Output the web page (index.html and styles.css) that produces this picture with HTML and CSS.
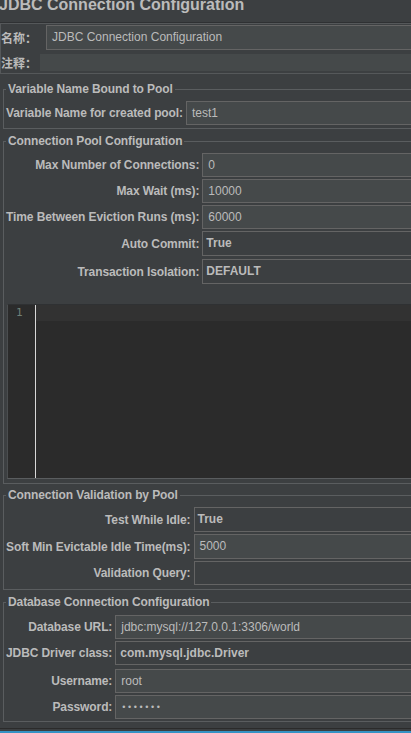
FILE: index.html
```html
<!DOCTYPE html>
<html lang="en">
<head>
  <meta charset="UTF-8" />
  <meta name="viewport" content="width=device-width, initial-scale=1.0"/>
  <title>JDBC Connection Configuration</title>
  <link rel="stylesheet" href="styles.css">
</head>
<body>

  <div class="page">
    <h1 class="title">JDBC Connection Configuration</h1>

    <div class="name-panel">
      <div class="name-row">
        <span class="name-label">名称：</span>
        <div class="field field--name">JDBC Connection Configuration</div>
      </div>
      <div class="name-row name-row--comment">
        <span class="name-label">注释：</span>
        <div class="comment"></div>
      </div>
    </div>

    <fieldset class="group group--var">
      <legend>Variable Name Bound to Pool</legend>
      <div class="form-grid">
        <label>Variable Name for created pool:</label>
        <div class="field">test1</div>
      </div>
    </fieldset>

    <fieldset class="group group--pool">
      <legend>Connection Pool Configuration</legend>
      <div class="form-grid">
        <label>Max Number of Connections:</label>
        <div class="field">0</div>
        <label>Max Wait (ms):</label>
        <div class="field">10000</div>
        <label>Time Between Eviction Runs (ms):</label>
        <div class="field">60000</div>
        <label>Auto Commit:</label>
        <div class="field field--combo">True</div>
        <label class="spaced">Transaction Isolation:</label>
        <div class="field field--combo spaced">DEFAULT</div>
      </div>

      <div class="editor">
        <div class="gutter"><span class="line-no">1</span></div>
        <div class="code">
          <div class="current-line"></div>
        </div>
      </div>
    </fieldset>

    <fieldset class="group group--validation">
      <legend>Connection Validation by Pool</legend>
      <div class="form-grid">
        <label>Test While Idle:</label>
        <div class="field field--combo">True</div>
        <label>Soft Min Evictable Idle Time(ms):</label>
        <div class="field field--tall">5000</div>
        <label>Validation Query:</label>
        <div class="field field--empty"></div>
      </div>
    </fieldset>

    <fieldset class="group group--db">
      <legend>Database Connection Configuration</legend>
      <div class="form-grid">
        <label>Database URL:</label>
        <div class="field">jdbc:mysql://127.0.0.1:3306/world</div>
        <label>JDBC Driver class:</label>
        <div class="field field--driver">com.mysql.jdbc.Driver</div>
        <label class="spaced-lg">Username:</label>
        <div class="field spaced-lg">root</div>
        <label>Password:</label>
        <div class="field field--password">•••••••</div>
      </div>
    </fieldset>

    <div class="status-bar"></div>
  </div>

</body>
</html>
```

FILE: styles.css
```css
body {
  margin: 0;
  padding: 0;
  background: #3c3f41;
  color: #bbbbbb;
  font-family: 'Liberation Sans', Arial, 'Noto Sans CJK SC', sans-serif;
  font-size: 12px;
  overflow: hidden;
}

.page {
  width: 440px;
  height: 733px;
  display: flex;
  flex-direction: column;
}

.title {
  margin: -3px 0 0 -1px;
  height: 26px;
  font-size: 16px;
  line-height: 16px;
  font-weight: bold;
  color: #bbbbbb;
  border-bottom: 1px solid #2f3133;
  box-sizing: border-box;
  flex: none;
}

/* name / comment block */
.name-panel {
  border-top: 1px solid #55585a;
  border-bottom: 1px solid #55585a;
  border-left: 1px solid #55585a;
  height: 51px;
  box-sizing: border-box;
  padding-top: 1px;
  flex: none;
}

.name-row {
  display: flex;
  align-items: center;
  height: 25px;
}

.name-row--comment {
  margin-top: 4px;
  height: 17px;
}

.name-label {
  font-family: 'Noto Sans CJK SC', sans-serif;
  font-weight: bold;
  width: 45px;
  flex: none;
}

.name-row--comment .name-label {
  width: 39px;
}

.comment {
  flex: 1;
  height: 17px;
  background: #45494a;
}

/* titled groups */
.group {
  margin: 8px 0 0 3px;
  padding: 5px 0 3px 2px;
  border: 1px solid #5a5d5f;
  border-right: none;
  min-width: 0;
  flex: none;
}

.group legend {
  margin-left: 0;
  padding: 0 2px;
  font-weight: bold;
  line-height: 14px;
  letter-spacing: -0.1px;
}

.group--pool { margin-top: 5px; padding-bottom: 4px; }
.group--validation { margin-top: 4px; padding-top: 5px; padding-bottom: 4px; }
.group--db { margin-top: 5px; padding-top: 6px; padding-bottom: 2px; }

.form-grid {
  display: grid;
  grid-template-columns: auto 1fr;
  row-gap: 2px;
  align-items: center;
}

.form-grid label {
  font-weight: bold;
  text-align: right;
  padding-right: 3px;
  white-space: nowrap;
  letter-spacing: -0.1px;
}

.form-grid .spaced { margin-top: 1px; }
.form-grid .spaced-lg { margin-top: 2px; }

.field {
  height: 24px;
  line-height: 22px;
  box-sizing: border-box;
  background: #45494a;
  border: 1px solid #646464;
  border-right: none;
  padding-left: 5px;
  white-space: nowrap;
  overflow: hidden;
}

.field--name {
  flex: 1;
  height: 25px;
  line-height: 23px;
}

.field--combo {
  height: 25px;
  font-weight: bold;
  padding-left: 3px;
  background: #3c3f41;
}

.field--tall {
  height: 25px;
  line-height: 23px;
}

.field--driver {
  font-weight: bold;
  padding-left: 4px;
  background: #3c3f41;
}

.field--empty {
  background: #3c3f41;
}

.field--password {
  font-size: 9px;
  letter-spacing: 2.6px;
  padding-left: 6px;
}

/* script editor */
.editor {
  display: flex;
  margin: 20px 0 0 1px;
  height: 175px;
  background: #2b2b2b;
  border-top: 1px solid #2f3133;
  border-bottom: 1px solid #5a5d5f;
  border-left: 1px solid #4b4e50;
  box-sizing: border-box;
}

.gutter {
  width: 28px;
  border-right: 1px solid #d8d8d8;
  padding-left: 8px;
  box-sizing: border-box;
}

.line-no {
  color: #6f8077;
  font-family: 'DejaVu Sans Mono', monospace;
  font-size: 11px;
  line-height: 16px;
}

.code {
  flex: 1;
}

.current-line {
  height: 16px;
  background: #323232;
}

.status-bar {
  margin-top: auto;
  height: 5px;
  box-sizing: border-box;
  border-top: 1px solid #2b2b2b;
  border-bottom: 2px solid #3592c4;
  flex: none;
}
```
